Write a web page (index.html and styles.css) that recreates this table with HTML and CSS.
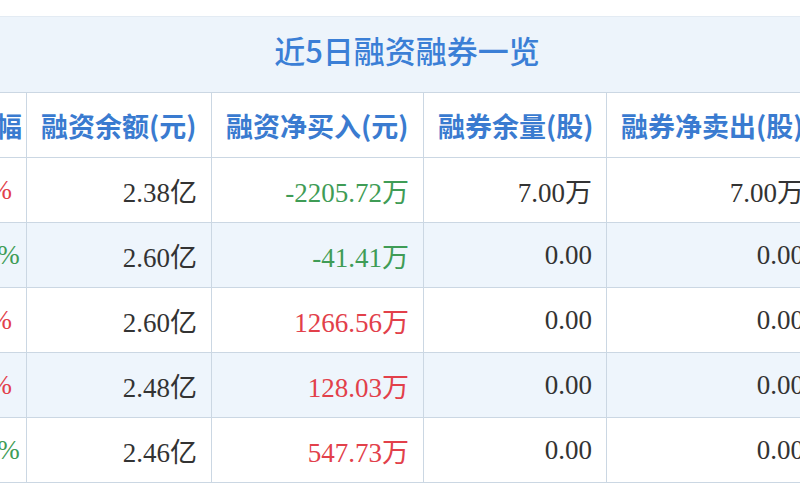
FILE: index.html
```html
<!DOCTYPE html>
<html lang="zh-CN">
<head>
<meta charset="utf-8">
<title>近5日融资融券一览</title>
<link rel="stylesheet" href="styles.css">
</head>
<body>
<div class="frame">
  <div class="title">近5日融资融券一览</div>
  <table class="grid">
    <colgroup>
      <col class="c1"><col class="c2"><col class="c3"><col class="c4"><col class="c5">
    </colgroup>
    <thead>
      <tr>
        <th>涨跌幅</th>
        <th>融资余额(元)</th>
        <th>融资净买入(元)</th>
        <th>融券余量(股)</th>
        <th>融券净卖出(股)</th>
      </tr>
    </thead>
    <tbody>
      <tr>
        <td class="up">1.23%</td><td>2.38亿</td><td class="down">-2205.72万</td><td>7.00万</td><td>7.00万</td>
      </tr>
      <tr class="alt">
        <td class="down">-0.56%</td><td>2.60亿</td><td class="down">-41.41万</td><td>0.00</td><td>0.00</td>
      </tr>
      <tr>
        <td class="up">0.87%</td><td>2.60亿</td><td class="up">1266.56万</td><td>0.00</td><td>0.00</td>
      </tr>
      <tr class="alt">
        <td class="up">2.15%</td><td>2.48亿</td><td class="up">128.03万</td><td>0.00</td><td>0.00</td>
      </tr>
      <tr>
        <td class="down">-1.02%</td><td>2.46亿</td><td class="up">547.73万</td><td>0.00</td><td>0.00</td>
      </tr>
    </tbody>
  </table>
</div>
</body>
</html>
```

FILE: styles.css
```css
html, body {
  margin: 0;
  padding: 0;
  background: #ffffff;
}

.frame {
  width: 800px;
  height: 500px;
  overflow: hidden;
  padding-top: 16px;
  box-sizing: border-box;
  background: #ffffff;
}

.title {
  height: 76px;
  box-sizing: border-box;
  border-top: 1px solid #e3ebf3;
  background: #edf4fb;
  color: #3b7fd6;
  font-family: "Noto Sans CJK SC", "Noto Sans", sans-serif;
  font-size: 31px;
  font-weight: 500;
  line-height: 66px;
  text-align: center;
  padding-left: 14px;
}

.grid {
  border-collapse: collapse;
  table-layout: fixed;
  width: 892px;
  margin-left: -74px;
}

.c1 { width: 100px; }
.c2 { width: 185px; }
.c3 { width: 212px; }
.c4 { width: 183px; }
.c5 { width: 212px; }

.grid th,
.grid td {
  border: 1px solid #cbd7e3;
  height: 65px;
  padding: 0 14px;
  box-sizing: border-box;
  white-space: nowrap;
  overflow: hidden;
}

.grid th {
  background: #ffffff;
  color: #3a7bd0;
  font-family: "Noto Sans CJK SC", "Noto Sans", sans-serif;
  font-size: 27px;
  font-weight: 700;
  text-align: left;
}

.grid thead th:first-child {
  text-align: right;
}

.grid td {
  background: #ffffff;
  color: #333333;
  font-family: "Liberation Serif", "Noto Sans CJK SC", serif;
  font-size: 27px;
  text-align: right;
}

.grid tr.alt td {
  background: #eef5fc;
}

.grid td.up {
  color: #e2404a;
}

.grid td.down {
  color: #3f9c56;
}
```
